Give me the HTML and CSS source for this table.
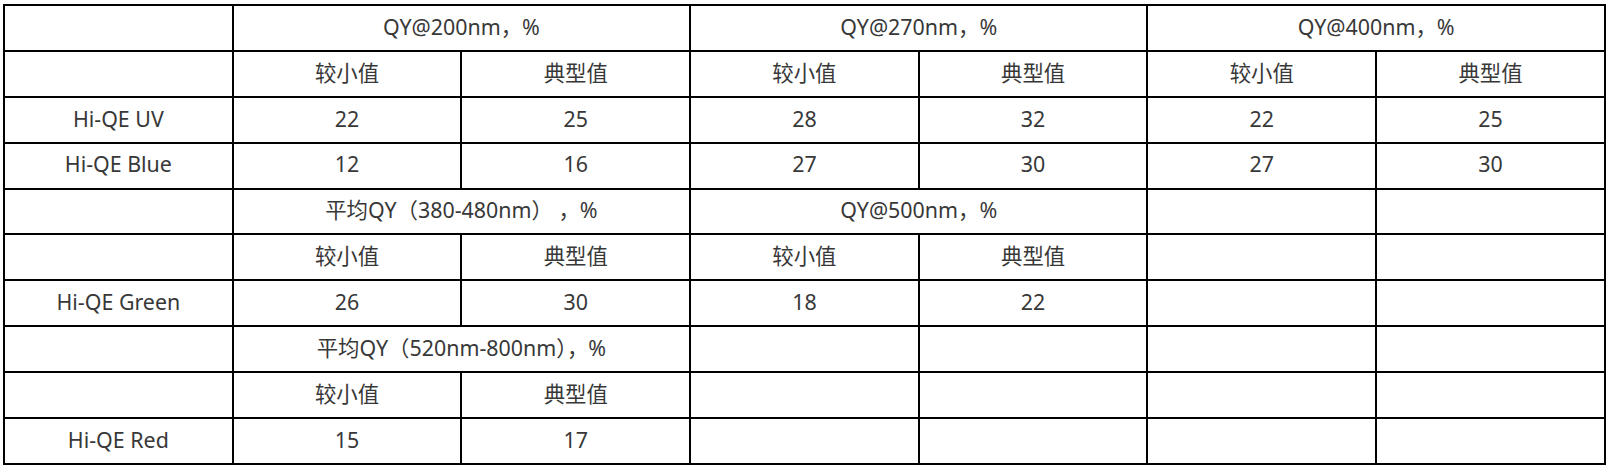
FILE: index.html
```html
<!DOCTYPE html>
<html lang="zh-CN">
<head>
<meta charset="utf-8">
<title>QY</title>
<link rel="stylesheet" href="styles.css">
</head>
<body>
<table class="qy">
  <colgroup>
    <col class="c"><col class="c"><col class="c"><col class="c"><col class="c"><col class="c"><col class="c">
  </colgroup>
  <tr><td></td><td colspan="2">QY@200nm，%</td><td colspan="2">QY@270nm，%</td><td colspan="2">QY@400nm，%</td></tr>
  <tr><td></td><td>较小值</td><td>典型值</td><td>较小值</td><td>典型值</td><td>较小值</td><td>典型值</td></tr>
  <tr><td>Hi-QE UV</td><td>22</td><td>25</td><td>28</td><td>32</td><td>22</td><td>25</td></tr>
  <tr><td>Hi-QE Blue</td><td>12</td><td>16</td><td>27</td><td>30</td><td>27</td><td>30</td></tr>
  <tr><td></td><td colspan="2">平均QY（380-480nm）&nbsp;，%</td><td colspan="2">QY@500nm，%</td><td></td><td></td></tr>
  <tr><td></td><td>较小值</td><td>典型值</td><td>较小值</td><td>典型值</td><td></td><td></td></tr>
  <tr><td>Hi-QE Green</td><td>26</td><td>30</td><td>18</td><td>22</td><td></td><td></td></tr>
  <tr><td></td><td colspan="2">平均QY（520nm-800nm），%</td><td></td><td></td><td></td><td></td></tr>
  <tr><td></td><td>较小值</td><td>典型值</td><td></td><td></td><td></td><td></td></tr>
  <tr><td>Hi-QE Red</td><td>15</td><td>17</td><td></td><td></td><td></td><td></td></tr>
</table>
</body>
</html>
```
FILE: styles.css
```css
html, body {
  margin: 0;
  padding: 0;
  background: #fff;
}
body {
  padding: 4px 0 0 3px;
  font-family: "Noto Sans", "Noto Sans CJK SC", sans-serif;
  font-size: 21.4px;
  color: #383838;
}
.qy {
  border-collapse: collapse;
  table-layout: fixed;
  width: 1601px;
}
.qy .c {
  width: 228.7px;
}
.qy tr {
  height: 45.9px;
}
.qy td {
  border: 2px solid #000;
  padding: 0 0 3px;
  text-align: center;
  vertical-align: middle;
  line-height: 1;
}
```
